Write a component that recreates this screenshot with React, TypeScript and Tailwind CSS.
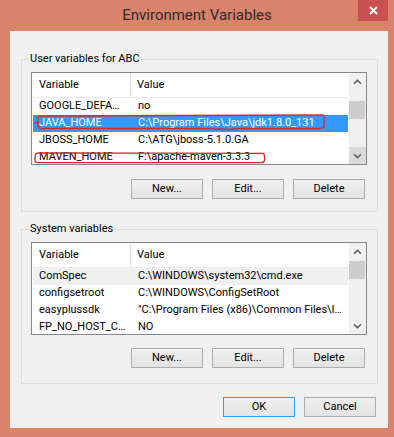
import React from 'react';

type Row = { name: string; value: string; state?: 'selected' | 'inactive' };

const USER_ROWS: Row[] = [
  { name: 'GOOGLE_DEFA…', value: 'no' },
  { name: 'JAVA_HOME', value: 'C:\\Program Files\\Java\\jdk1.8.0_131', state: 'selected' },
  { name: 'JBOSS_HOME', value: 'C:\\ATG\\jboss-5.1.0.GA' },
  { name: 'MAVEN_HOME', value: 'F:\\apache-maven-3.3.3' },
];

const SYSTEM_ROWS: Row[] = [
  { name: 'ComSpec', value: 'C:\\WINDOWS\\system32\\cmd.exe', state: 'inactive' },
  { name: 'configsetroot', value: 'C:\\WINDOWS\\ConfigSetRoot' },
  { name: 'easyplussdk', value: '"C:\\Program Files (x86)\\Common Files\\I…' },
  { name: 'FP_NO_HOST_C…', value: 'NO' },
];

const Chevron = ({ down }: { down?: boolean }) => (
  <svg width="9" height="6" viewBox="0 0 9 6">
    <path
      d={down ? 'M1 1.2 L4.5 4.6 L8 1.2' : 'M1 4.8 L4.5 1.4 L8 4.8'}
      fill="none"
      stroke="#606060"
      strokeWidth="1.6"
    />
  </svg>
);

const Button = ({ label, primary }: { label: string; primary?: boolean }) => (
  <button
    className={`w-[72px] h-[20px] flex items-center justify-center text-[11px] text-black border bg-gradient-to-b from-[#f0f0f0] to-[#e3e3e3] ${
      primary ? 'border-[#3399ff]' : 'border-[#adadad]'
    }`}
  >
    {label}
  </button>
);

const VarList = ({ rows, thumbTop, downHover }: { rows: Row[]; thumbTop: number; downHover?: boolean }) => (
  <div className="ml-[9px] w-[336px] h-[93px] border border-[#828790] bg-white flex pl-[1px] overflow-hidden">
    <div className="w-[315px] flex flex-col">
      <div className="h-[25px] shrink-0 flex border-b border-[#eaeaea] text-[11px] text-black">
        <div className="w-[98px] border-r border-[#e5e5e5] pl-[6px] flex items-center">Variable</div>
        <div className="flex-1 pl-[6px] flex items-center">Value</div>
      </div>
      {rows.map((r) => (
        <div
          key={r.name}
          className={`h-[17px] shrink-0 flex items-center text-[11px] whitespace-nowrap ${
            r.state === 'selected'
              ? 'bg-[#3399ff] text-white'
              : r.state === 'inactive'
              ? 'bg-[#f0f0f0] text-black'
              : 'text-black'
          }`}
        >
          <div className="w-[98px] pl-[6px] shrink-0">{r.name}</div>
          <div className="pl-[7px]">{r.value}</div>
        </div>
      ))}
    </div>
    <div className="ml-[1px] w-[17px] bg-[#f0f0f0] flex flex-col shrink-0">
      <div className="h-[17px] shrink-0 flex items-center justify-center">
        <Chevron />
      </div>
      <div className="flex-1 relative">
        <div className="absolute left-[0px] w-[16px] h-[18px] bg-[#cdcdcd]" style={{ top: thumbTop }} />
      </div>
      <div className={`h-[17px] shrink-0 flex items-center justify-center ${downHover ? 'bg-[#dadada]' : ''}`}>
        <Chevron down />
      </div>
    </div>
  </div>
);

const Group = ({ title, children, className }: { title: string; children: React.ReactNode; className: string }) => (
  <fieldset className={`ml-[11px] w-[357px] border border-[#dcdcdc] ${className}`}>
    <legend className="ml-[7px] px-[1px] text-[11px] leading-[14px] text-black">{title}</legend>
    {children}
  </fieldset>
);

export default function App() {
  return (
    <div className="w-[394px] h-[437px] bg-[#d8836a] relative font-['Roboto',sans-serif] flex flex-col pl-[10px] pr-[6px]">
      <div className="h-[31px] shrink-0 flex items-center justify-center text-[15px] text-[#2c2c2c] relative -ml-[10px] -mr-[6px]">
        Environment Variables
        <div className="absolute right-[6px] top-0 w-[30px] h-[21px] bg-[#c75050] flex items-center justify-center">
          <svg width="9" height="9" viewBox="0 0 9 9">
            <path d="M1 1 L8 8 M8 1 L1 8" stroke="white" strokeWidth="2" />
          </svg>
        </div>
      </div>

      <div className="h-[397px] bg-[#f0f0f0] flex flex-col">
        <Group title="User variables for ABC" className="mt-[21px] pb-[12px]">
          <div className="mt-[6px]">
            <VarList rows={USER_ROWS} thumbTop={11} downHover />
          </div>
          <div className="mt-[14px] flex justify-end gap-[9px] pr-[12px]">
            <Button label="New..." />
            <Button label="Edit..." />
            <Button label="Delete" />
          </div>
        </Group>

        <Group title="System variables" className="mt-[10px] pb-[15px]">
          <div className="mt-[6px]">
            <VarList rows={SYSTEM_ROWS} thumbTop={1} />
          </div>
          <div className="mt-[13px] flex justify-end gap-[9px] pr-[12px]">
            <Button label="New..." />
            <Button label="Edit..." />
            <Button label="Delete" />
          </div>
        </Group>

        <div className="mt-[13px] flex justify-end gap-[9px] pr-[12px]">
          <Button label="OK" primary />
          <Button label="Cancel" />
        </div>
      </div>

      <svg className="absolute inset-0 pointer-events-none" width="394" height="437">
        <path
          d="M38 116 L323 115 Q325 116 324 118 L324 127 Q323 128.5 318 128.5 L240 128.5 L230 129.5 L200 128.5 L41 128.5 Q38 128 38 125 L38 116 M34 123 L38 123"
          fill="none"
          stroke="#e5212b"
          strokeWidth="1.3"
        />
        <path
          d="M39 152.8 L262 153.3 Q264.5 153.5 264.5 156 L264.5 160.5 Q264 162.7 261 162.7 L37 162.5 Q35 162.3 35 160 L35.3 155 Q35.5 152.8 39 152.8"
          fill="none"
          stroke="#e5212b"
          strokeWidth="1.3"
        />
      </svg>
    </div>
  );
}
